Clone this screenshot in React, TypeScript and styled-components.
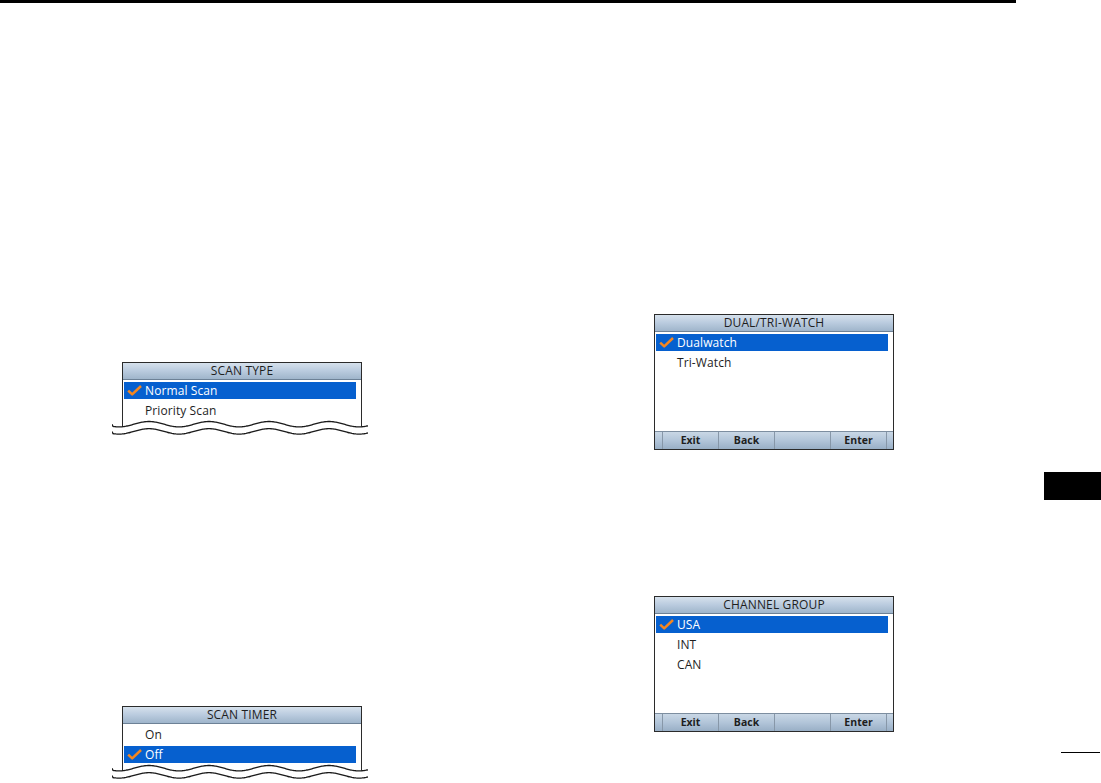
import React from "react";
import styled, { createGlobalStyle } from "styled-components";

// ─── Global ──────────────────────────────────────────────────────────────────

const GlobalStyle = createGlobalStyle`
  html, body {
    margin: 0;
    padding: 0;
    background: #ffffff;
  }
  body {
    font-family: "Open Sans", "Liberation Sans", sans-serif;
    color: #1a1a1a;
  }
`;

// ─── Page frame ──────────────────────────────────────────────────────────────

const Page = styled.div`
  width: 1101px;
  height: 783px;
  overflow: hidden;
  background: #fff;
`;

const TopRule = styled.div`
  width: 1016px;
  height: 3px;
  background: #000;
`;

const Columns = styled.div`
  display: flex;
  align-items: flex-start;
`;

const LeftColumn = styled.div`
  width: 532px;
  padding-left: 122px;
  display: flex;
  flex-direction: column;
`;

const RightColumn = styled.div`
  width: 240px;
  display: flex;
  flex-direction: column;
  padding-top: 311px;
  gap: 146px;
`;

const SideColumn = styled.div`
  flex: 1;
  display: flex;
  flex-direction: column;
  align-items: flex-end;
`;

const SectionTab = styled.div`
  width: 57px;
  height: 28px;
  margin-top: 469px;
  background: #000;
`;

const PageNumberRule = styled.div`
  width: 39px;
  height: 1px;
  margin-top: 252px;
  margin-right: 1px;
  background: #000;
`;

// ─── Screen parts ────────────────────────────────────────────────────────────

const Screen = styled.div<{ $height: number; $open?: boolean }>`
  width: 240px;
  height: ${({ $height }) => $height}px;
  box-sizing: border-box;
  border: 1px solid #2b2b2b;
  border-bottom: ${({ $open }) => ($open ? "none" : "1px solid #2b2b2b")};
  background: #fff;
  display: flex;
  flex-direction: column;
`;

const ScreenHeader = styled.div`
  height: 17px;
  flex-shrink: 0;
  box-sizing: border-box;
  border-bottom: 1px solid #6d8196;
  background: linear-gradient(#d6e1ec 0%, #bccde0 45%, #9fb5cb 100%);
  display: flex;
  align-items: center;
  justify-content: center;
  font-size: 12px;
  letter-spacing: 0.15px;
  color: #1e1e1e;
  line-height: 1;
`;

const OptionList = styled.div`
  flex: 1;
  display: flex;
  flex-direction: column;
  gap: 3px;
  padding: 2px 5px 0 1px;
`;

const OptionRow = styled.div<{ $selected?: boolean }>`
  height: 17px;
  position: relative;
  display: flex;
  align-items: center;
  padding-left: 21px;
  font-size: 12px;
  letter-spacing: 0.1px;
  line-height: 1;
  background: ${({ $selected }) => ($selected ? "#0660cf" : "transparent")};
  color: ${({ $selected }) => ($selected ? "#ffffff" : "#1e1e1e")};
`;

const CheckMark = styled.svg`
  position: absolute;
  left: 3px;
  top: 3px;
`;

const SoftKeyBar = styled.div`
  height: 17px;
  flex-shrink: 0;
  display: grid;
  grid-template-columns: 8px repeat(4, 56px) 1fr;
  border-top: 1px solid #7d8ea0;
  background: linear-gradient(#c9d7e5 0%, #b2c5d9 50%, #99afc6 100%);
`;

const SoftKey = styled.div`
  display: flex;
  align-items: center;
  justify-content: center;
  border-right: 1px solid #8797a8;
  font-size: 10.5px;
  font-weight: 700;
  color: #1e1e1e;
  line-height: 1;

  &:last-child {
    border-right: none;
  }
`;

const BreakWave = styled.svg`
  display: block;
  position: relative;
  margin-left: -10px;
  margin-top: -8px;
`;

const FirstCut = styled.div`
  margin-top: 359px;
`;

const SecondCut = styled.div`
  margin-top: 269px;
`;

// ─── Pieces ──────────────────────────────────────────────────────────────────

function Check(): React.ReactElement {
  return (
    <CheckMark width="15" height="11" viewBox="0 0 15 11" aria-hidden="true">
      <path
        d="M1.2 5.6 L5.2 9.4 L14 1"
        fill="none"
        stroke="#f5861f"
        strokeWidth="2.5"
        strokeLinejoin="round"
      />
    </CheckMark>
  );
}

function wavePath(y: number, width: number): string {
  const period = 60;
  const amp = 2.7;
  let d = `M0 ${y}`;
  for (let x = 1; x <= width; x += 1) {
    const yy = y + amp * Math.sin(((x + 8) / period) * Math.PI * 2);
    d += ` L${x} ${yy.toFixed(2)}`;
  }
  return d;
}

function Wave(): React.ReactElement {
  const w = 256;
  const upper = wavePath(4.2, w);
  const lower = wavePath(11.4, w);
  return (
    <BreakWave width={w} height="17" viewBox={`0 0 ${w} 17`} aria-hidden="true">
      <path d={`${upper} L${w} 17 L0 17 Z`} fill="#fff" />
      <path d={upper} fill="none" stroke="#1a1a1a" strokeWidth="1.3" />
      <path d={lower} fill="none" stroke="#1a1a1a" strokeWidth="1.3" />
    </BreakWave>
  );
}

interface Option {
  label: string;
  selected?: boolean;
}

function OptionItems({ options }: { options: Option[] }): React.ReactElement {
  return (
    <OptionList>
      {options.map((o) => (
        <OptionRow key={o.label} $selected={o.selected}>
          {o.selected && <Check />}
          {o.label}
        </OptionRow>
      ))}
    </OptionList>
  );
}

function CutScreen({
  title,
  options,
}: {
  title: string;
  options: Option[];
}): React.ReactElement {
  return (
    <>
      <Screen $height={66} $open>
        <ScreenHeader>{title}</ScreenHeader>
        <OptionItems options={options} />
      </Screen>
      <Wave />
    </>
  );
}

function FullScreen({
  title,
  options,
}: {
  title: string;
  options: Option[];
}): React.ReactElement {
  return (
    <Screen $height={136}>
      <ScreenHeader>{title}</ScreenHeader>
      <OptionItems options={options} />
      <SoftKeyBar>
        <SoftKey />
        <SoftKey>Exit</SoftKey>
        <SoftKey>Back</SoftKey>
        <SoftKey />
        <SoftKey>Enter</SoftKey>
        <SoftKey />
      </SoftKeyBar>
    </Screen>
  );
}

// ─── App ─────────────────────────────────────────────────────────────────────

export default function App(): React.ReactElement {
  return (
    <Page>
      <GlobalStyle />
      <TopRule />
      <Columns>
        <LeftColumn>
          <FirstCut>
            <CutScreen
              title="SCAN TYPE"
              options={[
                { label: "Normal Scan", selected: true },
                { label: "Priority Scan" },
              ]}
            />
          </FirstCut>
          <SecondCut>
            <CutScreen
              title="SCAN TIMER"
              options={[{ label: "On" }, { label: "Off", selected: true }]}
            />
          </SecondCut>
        </LeftColumn>
        <RightColumn>
          <FullScreen
            title="DUAL/TRI-WATCH"
            options={[
              { label: "Dualwatch", selected: true },
              { label: "Tri-Watch" },
            ]}
          />
          <FullScreen
            title="CHANNEL GROUP"
            options={[
              { label: "USA", selected: true },
              { label: "INT" },
              { label: "CAN" },
            ]}
          />
        </RightColumn>
        <SideColumn>
          <SectionTab />
          <PageNumberRule />
        </SideColumn>
      </Columns>
    </Page>
  );
}
